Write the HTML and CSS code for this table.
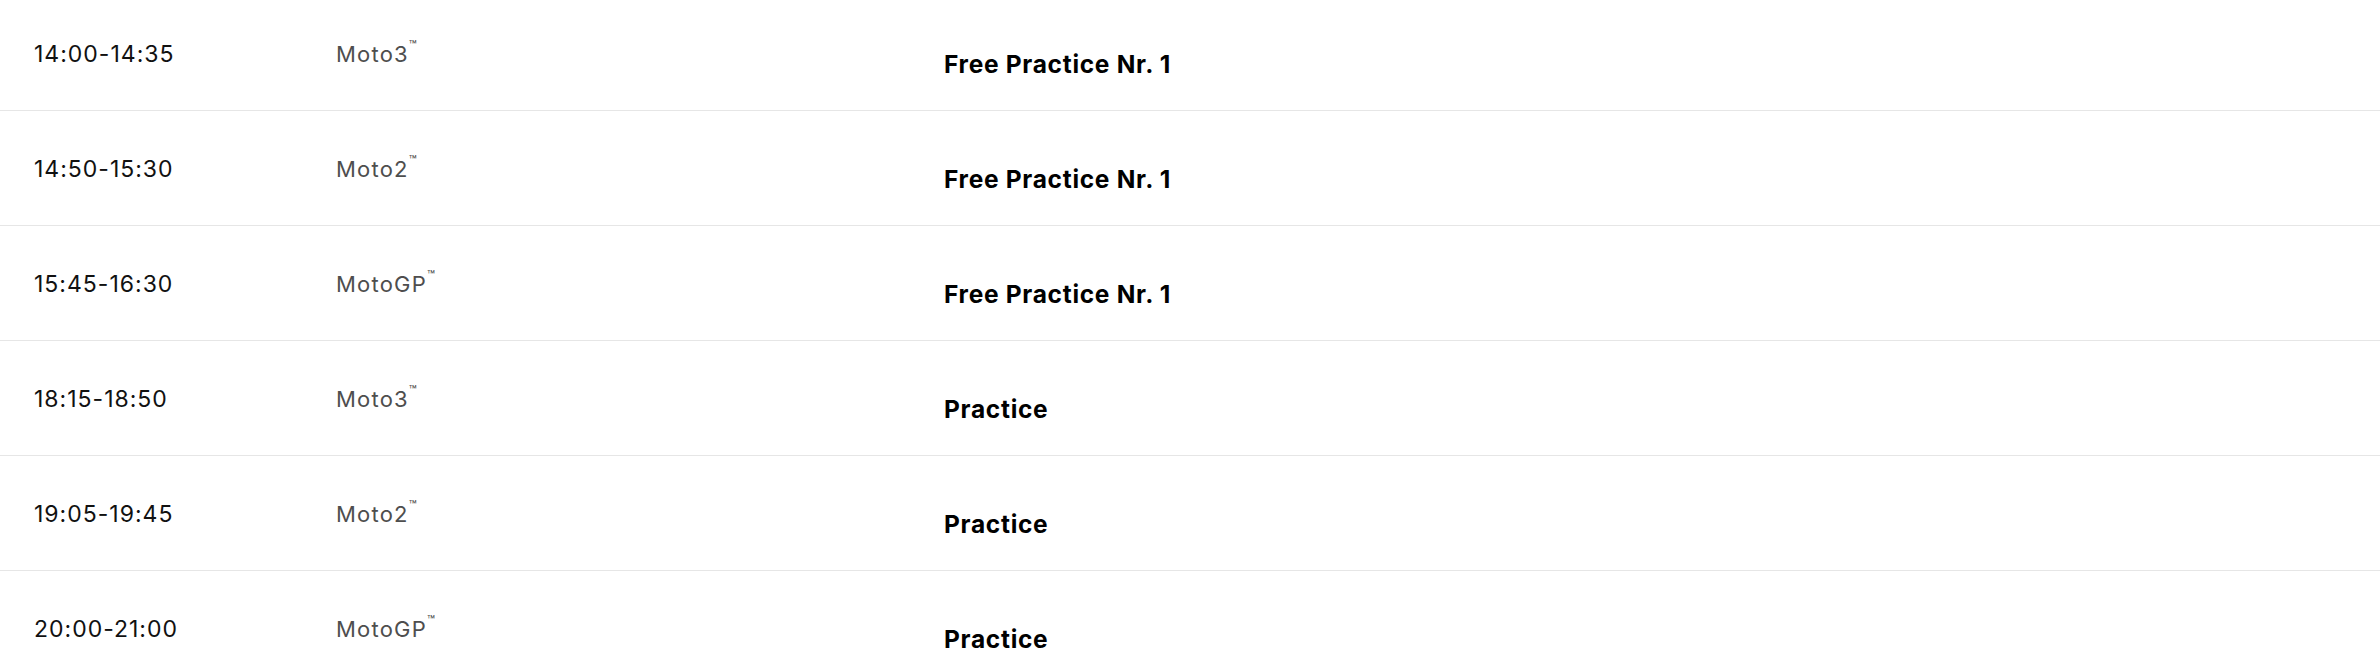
FILE: index.html
```html
<!DOCTYPE html>
<html lang="en">
<head>
<meta charset="utf-8">
<title>Schedule</title>
<link rel="stylesheet" href="styles.css">
</head>
<body>
<div class="schedule">
  <div class="row">
    <div class="time">14:00-14:35</div>
    <div class="cat">Moto3<sup class="tm">™</sup></div>
    <div class="title">Free Practice Nr. 1</div>
  </div>
  <div class="row">
    <div class="time">14:50-15:30</div>
    <div class="cat">Moto2<sup class="tm">™</sup></div>
    <div class="title">Free Practice Nr. 1</div>
  </div>
  <div class="row">
    <div class="time">15:45-16:30</div>
    <div class="cat">MotoGP<sup class="tm">™</sup></div>
    <div class="title">Free Practice Nr. 1</div>
  </div>
  <div class="row">
    <div class="time">18:15-18:50</div>
    <div class="cat">Moto3<sup class="tm">™</sup></div>
    <div class="title">Practice</div>
  </div>
  <div class="row">
    <div class="time">19:05-19:45</div>
    <div class="cat">Moto2<sup class="tm">™</sup></div>
    <div class="title">Practice</div>
  </div>
  <div class="row">
    <div class="time">20:00-21:00</div>
    <div class="cat">MotoGP<sup class="tm">™</sup></div>
    <div class="title">Practice</div>
  </div>
</div>
</body>
</html>
```

FILE: styles.css
```css
html, body {
  margin: 0;
  padding: 0;
  background: #ffffff;
}

.schedule {
  margin-top: -4px;
  overflow: hidden;
}

.row {
  display: grid;
  grid-template-columns: 336px 608px 1fr;
  height: 114px;
  border-bottom: 1px solid #e6e6e6;
  align-items: start;
}

.time {
  padding-left: 34px;
  padding-top: 42px;
  font-family: "Inter", "Liberation Sans", sans-serif;
  font-size: 23px;
  letter-spacing: 1px;
  line-height: 32px;
  color: #111111;
}

.cat {
  padding-top: 42px;
  font-family: "Inter", "Liberation Sans", sans-serif;
  font-size: 22px;
  letter-spacing: 1.2px;
  line-height: 32px;
  color: #4e4e4e;
}

.tm {
  font-size: 13px;
  vertical-align: top;
  line-height: 14px;
  letter-spacing: 0;
  margin-left: 0;
}

.title {
  padding-top: 52px;
  font-family: "Inter", "Liberation Sans", sans-serif;
  font-weight: 700;
  font-size: 24.5px;
  letter-spacing: 0.7px;
  line-height: 32px;
  color: #000000;
}
```
